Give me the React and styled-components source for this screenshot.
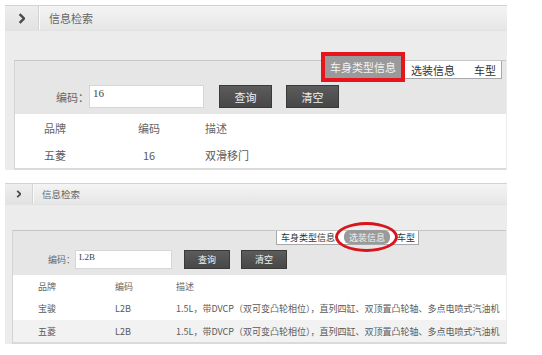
import React from "react";
import styled, { createGlobalStyle, css } from "styled-components";

const GlobalStyle = createGlobalStyle`
  html, body {
    margin: 0;
    padding: 0;
    background: #ffffff;
  }
  body {
    font-family: "Noto Sans CJK SC", "Noto Sans", "Liberation Sans", sans-serif;
    color: #555;
  }
`;

const large = {
  top: 5,
  headH: 24,
  arrowW: 33,
  chev: 11,
  title: 11,
  titleGap: 10,
  padTop: 29,
  padLeft: 9,
  font: 11,
  tabH: 18,
  activeH: 22,
  tabsMargin: "0 4px 0 auto",
  formTop: 6,
  formH: 23,
  formBottom: 6,
  labelPad: 41,
  inputW: 115,
  btnW: 53,
  btnGap: 15,
  btnGap2: 14,
  tablePad: 29,
  cols: "72px 66px 1fr",
  descPad: 23,
  centerCode: true,
  rows: [28, 26],
  striped: false,
};

const small = {
  top: 13,
  headH: 20,
  arrowW: 27,
  chev: 8,
  title: 9.5,
  titleGap: 9,
  padTop: 25,
  padLeft: 7,
  font: 9,
  tabH: 14,
  activeH: 14,
  tabsMargin: "0 0 0 263px",
  formTop: 5,
  formH: 19,
  formBottom: 6,
  labelPad: 35,
  inputW: 97,
  btnW: 46,
  btnGap: 12,
  btnGap2: 11,
  tablePad: 25,
  cols: "77px 61px 1fr",
  descPad: 0,
  centerCode: false,
  rows: [22, 23, 22],
  striped: true,
};

const Page = styled.div`
  display: flex;
  flex-direction: column;
  width: 542px;
`;

const Panel = styled.section`
  margin: ${(p) => p.$v.top}px 0 0 5px;
  width: 502px;
  background: #ececec;
`;

const Header = styled.header`
  display: flex;
  align-items: stretch;
  height: ${(p) => p.$v.headH}px;
  border-top: 1px solid #d2d2d2;
  background: linear-gradient(#f4f4f4, #e6e6e6);
  border-bottom: 1px solid #e2e2e2;
`;

const ArrowCell = styled.div`
  width: ${(p) => p.$v.arrowW}px;
  display: flex;
  align-items: center;
  justify-content: center;
  border-right: 1px solid #d4d4d4;
  box-shadow: 1px 0 0 #fafafa;
  background: linear-gradient(#eeeeee, #e2e2e2);
`;

const Title = styled.h2`
  margin: 0;
  padding-left: ${(p) => p.$v.titleGap}px;
  display: flex;
  align-items: center;
  font-size: ${(p) => p.$v.title}px;
  font-weight: normal;
  color: #666;
`;

const Body = styled.div`
  padding: ${(p) => p.$v.padTop}px 1px 0 ${(p) => p.$v.padLeft}px;
`;

const Box = styled.div`
  border-top: 1px solid #c6c6c6;
  border-left: 1px solid #d4d4d4;
  background: #e6e6e6;
`;

const TabRow = styled.div`
  display: flex;
  align-items: flex-end;
  height: ${(p) => p.$v.tabH}px;
`;

const TabStrip = styled.div`
  display: flex;
  align-items: flex-end;
  margin: ${(p) => p.$v.tabsMargin};
  height: ${(p) => p.$v.tabH}px;
  background: #ffffff;
  border: 1px solid #a8a8a8;
  border-top: none;
  box-sizing: border-box;
`;

const Tab = styled.div`
  display: flex;
  align-items: center;
  justify-content: center;
  height: ${(p) => p.$v.tabH - 1}px;
  padding: ${(p) => p.$pad};
  font-size: ${(p) => p.$v.font}px;
  color: #333;
  white-space: nowrap;
  ${(p) =>
    p.$active &&
    css`
      position: relative;
      height: ${p.$v.activeH}px;
      background: #9a9a9a;
      color: #f4f4f4;
    `}
  ${(p) =>
    p.$mark === "box" &&
    css`
      outline: 4px solid #e8141b;
    `}
  ${(p) =>
    p.$mark === "ring" &&
    css`
      margin: 0 7px;
      border-radius: 6px;
      &::after {
        content: "";
        position: absolute;
        left: -9px;
        right: -8px;
        top: -8px;
        bottom: -8px;
        border: 3px solid #d9141c;
        border-radius: 50%;
      }
    `}
`;

const Form = styled.div`
  display: flex;
  align-items: center;
  margin-top: ${(p) => p.$v.formTop}px;
  padding: 0 0 ${(p) => p.$v.formBottom}px ${(p) => p.$v.labelPad}px;
`;

const Label = styled.label`
  font-size: ${(p) => p.$v.font}px;
  color: #666;
  white-space: nowrap;
`;

const Input = styled.div`
  box-sizing: border-box;
  width: ${(p) => p.$v.inputW}px;
  height: ${(p) => p.$v.formH}px;
  padding: 1px 3px;
  background: #ffffff;
  border: 1px solid #d6d6d6;
  font-family: "Liberation Serif", serif;
  font-size: ${(p) => p.$v.font}px;
  color: #444;
`;

const Button = styled.button`
  box-sizing: border-box;
  width: ${(p) => p.$v.btnW}px;
  height: ${(p) => p.$v.formH}px;
  margin-left: ${(p) => p.$gap}px;
  padding: 0;
  border: 1px solid #3a3a3a;
  background: linear-gradient(#5c5c5c, #474747);
  color: #f2f2f2;
  font-family: inherit;
  font-size: ${(p) => p.$v.font}px;
`;

const Table = styled.div`
  background: #ffffff;
  border-bottom: 2px solid #dadada;
`;

const Row = styled.div`
  display: grid;
  grid-template-columns: ${(p) => p.$v.cols};
  align-items: center;
  height: ${(p) => p.$h}px;
  padding-left: ${(p) => p.$v.tablePad}px;
  font-size: ${(p) => p.$v.font}px;
  color: ${(p) => (p.$head ? "#666" : "#5a5a5a")};
  background: ${(p) => (p.$stripe ? "#f2f2f2" : "#ffffff")};
  white-space: nowrap;
`;

const Cell = styled.div`
  text-align: ${(p) => (p.$center ? "center" : "left")};
  padding-left: ${(p) => p.$pad || 0}px;
`;

const Chevron = ({ size }) => (
  <svg width={size * 0.7} height={size} viewBox="0 0 7 10">
    <path d="M1.5 1 L5.5 5 L1.5 9" fill="none" stroke="#4a4a4a" strokeWidth="2.2" />
  </svg>
);

const desc = "1.5L，带DVCP（双可变凸轮相位），直列四缸、双顶置凸轮轴、多点电喷式汽油机";

const SearchPanel = ({ v, tabs, code, rows }) => (
  <Panel $v={v}>
    <Header $v={v}>
      <ArrowCell $v={v}>
        <Chevron size={v.chev} />
      </ArrowCell>
      <Title $v={v}>信息检索</Title>
    </Header>
    <Body $v={v}>
      <Box>
        <TabRow $v={v}>
          <TabStrip $v={v}>
            {tabs.map((t) => (
              <Tab key={t.label} $v={v} $active={t.active} $mark={t.mark} $pad={t.pad}>
                {t.label}
              </Tab>
            ))}
          </TabStrip>
        </TabRow>
        <Form $v={v}>
          <Label $v={v}>编码：</Label>
          <Input $v={v}>{code}</Input>
          <Button $v={v} $gap={v.btnGap}>查询</Button>
          <Button $v={v} $gap={v.btnGap2}>清空</Button>
        </Form>
        <Table>
          <Row $v={v} $h={v.rows[0]} $head>
            <Cell>品牌</Cell>
            <Cell $center={v.centerCode}>编码</Cell>
            <Cell $pad={v.descPad}>描述</Cell>
          </Row>
          {rows.map((r, i) => (
            <Row key={r.brand} $v={v} $h={v.rows[i + 1]} $stripe={v.striped && i % 2 === 1}>
              <Cell>{r.brand}</Cell>
              <Cell $center={v.centerCode}>{r.code}</Cell>
              <Cell $pad={v.descPad}>{r.desc}</Cell>
            </Row>
          ))}
        </Table>
      </Box>
    </Body>
  </Panel>
);

export default function App() {
  return (
    <Page>
      <GlobalStyle />
      <SearchPanel
        v={large}
        code="16"
        tabs={[
          { label: "车身类型信息", active: true, mark: "box", pad: "0 5px" },
          { label: "选装信息", pad: "0 6px 0 10px" },
          { label: "车型", pad: "0 5px 0 13px" },
        ]}
        rows={[{ brand: "五菱", code: "16", desc: "双滑移门" }]}
      />
      <SearchPanel
        v={small}
        code="L2B"
        tabs={[
          { label: "车身类型信息", pad: "0 2px 0 4px" },
          { label: "选装信息", active: true, mark: "ring", pad: "0 5px" },
          { label: "车型", pad: "0 3px 0 0" },
        ]}
        rows={[
          { brand: "宝骏", code: "L2B", desc },
          { brand: "五菱", code: "L2B", desc },
        ]}
      />
    </Page>
  );
}
